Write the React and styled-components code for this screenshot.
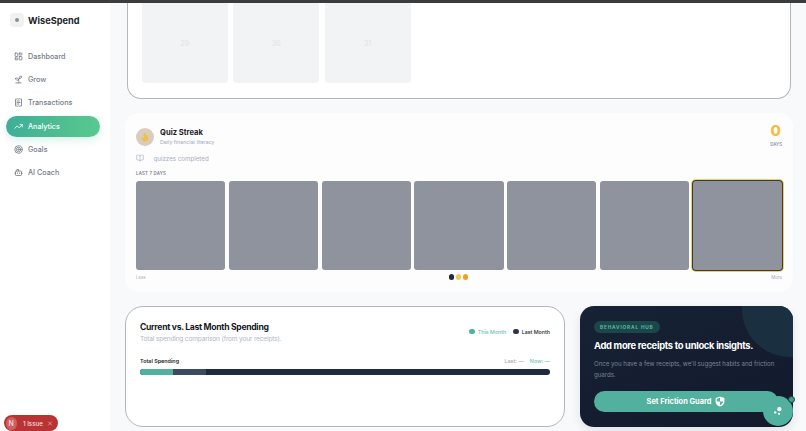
import React from 'react'
import styled, { createGlobalStyle } from 'styled-components'
import { LayoutDashboard, Sprout, ReceiptText, TrendingUp, Target, Bot, BookOpen, Flame, X } from 'lucide-react'

const GlobalStyle = createGlobalStyle`
  html, body { margin: 0; height: 100%; overflow: hidden; }
  body { font-family: Inter, "Open Sans", "Liberation Sans", sans-serif; background: #f8f9fb; }
  * { box-sizing: border-box; }
`

const Page = styled('div')`
  position: relative;
  width: 806px;
  height: 431px;
  overflow: hidden;
  display: flex;
  border-top: 3px solid #3c3c3e;
`

const Sidebar = styled('aside')`
  width: 110px;
  flex-shrink: 0;
  background: #fff;
  padding: 10px 10px 0 6px;
`

const Brand = styled('div')`
  display: flex;
  align-items: center;
  gap: 4px;
  padding-left: 4px;
  margin-bottom: 18.5px;
`

const BrandTile = styled('div')`
  width: 14px;
  height: 14px;
  border-radius: 4px;
  background: #f1f1f2;
  display: flex;
  align-items: center;
  justify-content: center;
  &::after {
    content: '';
    width: 4px;
    height: 4px;
    border-radius: 50%;
    background: #8c8f96;
  }
`

const BrandName = styled('div')`
  font-size: 9.2px;
  font-weight: 700;
  color: #20242c;
`

const Nav = styled('nav')`
  display: flex;
  flex-direction: column;
  gap: 2.4px;
`

const NavItem = styled('div')`
  height: 21px;
  display: flex;
  align-items: center;
  gap: 5px;
  padding-left: 8px;
  border-radius: 11px;
  font-size: 7.2px;
  font-weight: 500;
  color: ${props => props.$active ? '#fff' : '#747a86'};
  background: ${props => props.$active ? 'linear-gradient(90deg, #3fae97, #59c98f)' : 'transparent'};
  box-shadow: ${props => props.$active ? '0 3px 8px rgba(89, 201, 160, .25)' : 'none'};
`

const Main = styled('main')`
  flex: 1;
  padding: 0 13px 0 15px;
  display: flex;
  flex-direction: column;
`

const CalendarCard = styled('section')`
  height: 96px;
  flex-shrink: 0;
  margin: 0 2px 14px 2px;
  padding: 0 14px 15px;
  background: #fff;
  border: 1px solid #b4b6bb;
  border-top: 0;
  border-radius: 0 0 14px 14px;
  display: grid;
  grid-template-columns: repeat(7, 1fr);
  gap: 5.6px;
`

const DayCell = styled('div')`
  background: #f2f3f4;
  border-radius: 0 0 4px 4px;
  display: flex;
  align-items: center;
  justify-content: center;
  font-size: 7px;
  color: #e2e3e6;
`

const StreakCard = styled('section')`
  height: 179px;
  flex-shrink: 0;
  margin-bottom: 14px;
  padding: 14px 11px 0 11px;
  background: #fdfdfe;
  border-radius: 14px;
`

const StreakHead = styled('div')`
  display: flex;
  justify-content: space-between;
  align-items: flex-start;
`

const StreakTitleRow = styled('div')`
  display: flex;
  align-items: center;
  gap: 6px;
  height: 20px;
`

const FlameBadge = styled('div')`
  width: 18px;
  height: 18px;
  border-radius: 50%;
  background: #dacbbd;
  display: flex;
  align-items: center;
  justify-content: center;
  color: #eec04a;
`

const StreakTitle = styled('div')`
  font-size: 7.6px;
  font-weight: 700;
  color: #1a1d24;
  line-height: 10px;
`

const StreakSub = styled('div')`
  font-size: 5.3px;
  color: #a4abbd;
  line-height: 8px;
`

const StreakCount = styled('div')`
  text-align: right;
  margin-top: -4px;
`

const CountNumber = styled('div')`
  font-size: 15px;
  font-weight: 800;
  color: #f6bc3c;
  line-height: 16px;
  padding-right: 1px;
`

const CountLabel = styled('div')`
  font-size: 4.4px;
  font-weight: 600;
  color: #8f96a8;
  line-height: 8px;
  margin-top: 2px;
`

const CompletedRow = styled('div')`
  display: flex;
  align-items: center;
  gap: 9.5px;
  margin-top: 4px;
  height: 10px;
  font-size: 6.2px;
  color: #a8aebd;
`

const SectionLabel = styled('div')`
  margin-top: 7px;
  height: 8px;
  line-height: 8px;
  font-size: 4.4px;
  font-weight: 600;
  color: #7e8494;
  letter-spacing: .2px;
`

const WeekGrid = styled('div')`
  display: grid;
  grid-template-columns: repeat(7, 1fr);
  gap: 3.8px;
  margin-top: 3px;
`

const WeekCell = styled('div')`
  height: 89px;
  border-radius: 3px;
  background: #8f939e;
  ${props => props.$today && `
    box-shadow: 0 0 0 1px #3b3b30, 0 0 0 2px #f3cd62;
  `}
`

const ScaleRow = styled('div')`
  display: flex;
  justify-content: space-between;
  align-items: center;
  margin-top: 3px;
  height: 8px;
  font-size: 4.4px;
  color: #a4a8b4;
`

const ScaleDots = styled('div')`
  display: flex;
  gap: 1.8px;
`

const ScaleDot = styled('span')`
  width: 5.4px;
  height: 5.4px;
  border-radius: 50%;
  background: ${props => props.$color};
`

const BottomRow = styled('div')`
  display: grid;
  grid-template-columns: 440px 213px;
  gap: 15px;
`

const CompareCard = styled('section')`
  height: 121px;
  padding: 14px 14px 0 14px;
  background: #fff;
  border: 1px solid #b4b6bb;
  border-radius: 18px;
`

const CompareHead = styled('div')`
  display: flex;
  justify-content: space-between;
  align-items: center;
`

const CompareTitle = styled('div')`
  font-size: 8.6px;
  font-weight: 700;
  color: #15181f;
  line-height: 12px;
  letter-spacing: -.3px;
`

const CompareSub = styled('div')`
  font-size: 6.6px;
  color: #b2b7c6;
  line-height: 10px;
  margin-top: 1px;
  letter-spacing: -.19px;
`

const Legend = styled('div')`
  display: flex;
  align-items: center;
  gap: 7px;
  margin-top: -2px;
`

const LegendItem = styled('div')`
  display: flex;
  align-items: center;
  gap: 3px;
  font-size: 5.3px;
  font-weight: 500;
  color: ${props => props.$color};
`

const LegendDot = styled('span')`
  width: 5.4px;
  height: 5.4px;
  border-radius: 50%;
  background: ${props => props.$color};
`

const TotalRow = styled('div')`
  display: flex;
  justify-content: space-between;
  align-items: center;
  margin-top: 13px;
  height: 8px;
  font-size: 5.4px;
  font-weight: 600;
  color: #1a1d24;
`

const TotalValues = styled('div')`
  display: flex;
  gap: 6px;
  font-weight: 500;
`

const TotalValue = styled('span')`
  color: ${props => props.$color};
`

const Bar = styled('div')`
  display: flex;
  height: 5.5px;
  margin-top: 4px;
  border-radius: 3px;
  overflow: hidden;
  background: #1e2a40;
`

const BarPart = styled('div')`
  width: 33px;
  background: ${props => props.$color};
`

const HubCard = styled('section')`
  position: relative;
  height: 121px;
  padding: 15px 15px 0 14px;
  border-radius: 14px;
  overflow: hidden;
  background: linear-gradient(160deg, #172235, #121a2c);
  box-shadow: 0 4px 10px rgba(20, 30, 50, .1);
  &::before {
    content: '';
    position: absolute;
    top: -45px;
    right: -45px;
    width: 96px;
    height: 96px;
    border-radius: 50%;
    background: #1a2f3f;
  }
`

const HubTag = styled('div')`
  position: relative;
  width: fit-content;
  height: 12px;
  line-height: 12px;
  padding: 0 6px;
  border-radius: 6px;
  background: #1c4649;
  color: #58b9a5;
  font-size: 4.8px;
  font-weight: 700;
  letter-spacing: .8px;
`

const HubTitle = styled('div')`
  position: relative;
  margin-top: 6px;
  font-size: 9.4px;
  font-weight: 700;
  color: #fff;
  line-height: 14px;
  letter-spacing: -.3px;
  white-space: nowrap;
`

const HubText = styled('div')`
  margin-top: 6px;
  font-size: 6.1px;
  color: #7b8596;
  line-height: 10.5px;
`

const HubButton = styled('div')`
  margin-top: 11px;
  height: 21px;
  border-radius: 11px;
  background: #52b09e;
  color: #fff;
  font-size: 7.4px;
  font-weight: 700;
  display: flex;
  align-items: center;
  justify-content: center;
  gap: 4px;
`

const Fab = styled('div')`
  position: absolute;
  left: 763px;
  top: 393px;
  width: 30px;
  height: 30px;
  border-radius: 50%;
  background: #52b09e;
  color: #fff;
  display: flex;
  align-items: center;
  justify-content: center;
`

const FabDot = styled('div')`
  position: absolute;
  left: 787.5px;
  top: 392.5px;
  width: 7px;
  height: 7px;
  border-radius: 50%;
  background: #3f9f8d;
  border: 1px solid #17423f;
`

const IssuePill = styled('div')`
  position: absolute;
  left: 4px;
  top: 412px;
  width: 54px;
  height: 16px;
  padding: 0 5px 0 1.5px;
  border-radius: 8px;
  background: #b83434;
  color: #f8dcdc;
  display: flex;
  align-items: center;
  font-size: 6.2px;
  font-weight: 500;
  white-space: nowrap;
`

const IssueAvatar = styled('div')`
  width: 13px;
  height: 13px;
  border-radius: 50%;
  background: #cc6060;
  display: flex;
  align-items: center;
  justify-content: center;
  font-size: 7px;
  margin-right: 6px;
`

const IssueLabel = styled('span')`
  margin-right: 4px;
`

const navItems = [
  { label: 'Dashboard', icon: LayoutDashboard },
  { label: 'Grow', icon: Sprout },
  { label: 'Transactions', icon: ReceiptText },
  { label: 'Analytics', icon: TrendingUp, active: true },
  { label: 'Goals', icon: Target },
  { label: 'AI Coach', icon: Bot },
]

const HubIcon = () => (
  <svg width="10" height="10" viewBox="0 0 10 10" fill="currentColor">
    <circle cx="6.4" cy="3.2" r="2.1" />
    <circle cx="2.2" cy="6.4" r="1.2" />
    <circle cx="6" cy="7.8" r="1.1" />
  </svg>
)

const ShieldIcon = () => (
  <svg width="10" height="11" viewBox="0 0 10 11">
    <path d="M5 .4 9.4 2v3.4c0 2.7-1.9 4.4-4.4 5.2C2.5 9.800.6 8.100.6 5.400V2Z" fill="#fff" />
    <path d="M5 1.800V5.400H8.200C8 7 6.800 8.300 5 9V5.400H1.800V2.900Z" fill="#52b09e" />
  </svg>
)

const App = () => {
  return (
    <Page>
      <GlobalStyle />
      <Sidebar>
        <Brand>
          <BrandTile />
          <BrandName>WiseSpend</BrandName>
        </Brand>
        <Nav>
          {navItems.map(item => (
            <NavItem key={item.label} $active={item.active}>
              <item.icon size={9} strokeWidth={2.2} />
              {item.label}
            </NavItem>
          ))}
        </Nav>
      </Sidebar>
      <Main>
        <CalendarCard>
          <DayCell>29</DayCell>
          <DayCell>30</DayCell>
          <DayCell>31</DayCell>
        </CalendarCard>
        <StreakCard>
          <StreakHead>
            <StreakTitleRow>
              <FlameBadge><Flame size={10} fill="currentColor" /></FlameBadge>
              <div>
                <StreakTitle>Quiz Streak</StreakTitle>
                <StreakSub>Daily financial literacy</StreakSub>
              </div>
            </StreakTitleRow>
            <StreakCount>
              <CountNumber>0</CountNumber>
              <CountLabel>DAYS</CountLabel>
            </StreakCount>
          </StreakHead>
          <CompletedRow>
            <BookOpen size={8} strokeWidth={1.8} />
            quizzes completed
          </CompletedRow>
          <SectionLabel>LAST 7 DAYS</SectionLabel>
          <WeekGrid>
            {[0, 1, 2, 3, 4, 5, 6].map(day => <WeekCell key={day} $today={day === 6} />)}
          </WeekGrid>
          <ScaleRow>
            <span>Less</span>
            <ScaleDots>
              <ScaleDot $color="#1e2a40" />
              <ScaleDot $color="#f3c95c" />
              <ScaleDot $color="#eda21e" />
            </ScaleDots>
            <span>More</span>
          </ScaleRow>
        </StreakCard>
        <BottomRow>
          <CompareCard>
            <CompareHead>
              <div>
                <CompareTitle>Current vs. Last Month Spending</CompareTitle>
                <CompareSub>Total spending comparison (from your receipts).</CompareSub>
              </div>
              <Legend>
                <LegendItem $color="#6cc3b0"><LegendDot $color="#52b09e" />This Month</LegendItem>
                <LegendItem $color="#1a1d24"><LegendDot $color="#2b3550" />Last Month</LegendItem>
              </Legend>
            </CompareHead>
            <TotalRow>
              Total Spending
              <TotalValues>
                <TotalValue $color="#a6abb8">Last: —</TotalValue>
                <TotalValue $color="#6cc9b4">Now: —</TotalValue>
              </TotalValues>
            </TotalRow>
            <Bar>
              <BarPart $color="#52b09e" />
              <BarPart $color="#3a4a60" />
            </Bar>
          </CompareCard>
          <HubCard>
            <HubTag>BEHAVIORAL HUB</HubTag>
            <HubTitle>Add more receipts to unlock insights.</HubTitle>
            <HubText>Once you have a few receipts, we'll suggest habits and friction guards.</HubText>
            <HubButton>Set Friction Guard <ShieldIcon /></HubButton>
          </HubCard>
        </BottomRow>
      </Main>
      <Fab><HubIcon /></Fab>
      <FabDot />
      <IssuePill>
        <IssueAvatar>N</IssueAvatar>
        <IssueLabel>1 Issue</IssueLabel>
        <X size={7} />
      </IssuePill>
    </Page>
  )
}

export default App
